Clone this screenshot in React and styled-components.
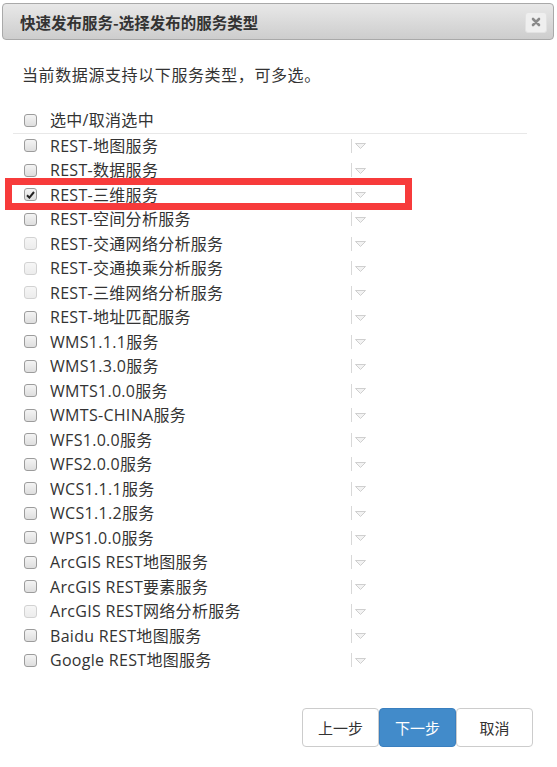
import React from "react";
import styled, { createGlobalStyle, css } from "styled-components";

const GlobalStyle = createGlobalStyle`
  html, body {
    margin: 0;
    padding: 0;
    background: #fff;
  }
  body {
    font-family: "Open Sans", "Noto Sans CJK SC", sans-serif;
    color: #333;
  }
`;

const services = [
  { label: "REST-地图服务" },
  { label: "REST-数据服务" },
  { label: "REST-三维服务", checked: true, highlight: true },
  { label: "REST-空间分析服务" },
  { label: "REST-交通网络分析服务", disabled: true },
  { label: "REST-交通换乘分析服务", disabled: true },
  { label: "REST-三维网络分析服务", disabled: true },
  { label: "REST-地址匹配服务" },
  { label: "WMS1.1.1服务" },
  { label: "WMS1.3.0服务" },
  { label: "WMTS1.0.0服务" },
  { label: "WMTS-CHINA服务" },
  { label: "WFS1.0.0服务" },
  { label: "WFS2.0.0服务" },
  { label: "WCS1.1.1服务" },
  { label: "WCS1.1.2服务" },
  { label: "WPS1.0.0服务" },
  { label: "ArcGIS REST地图服务" },
  { label: "ArcGIS REST要素服务" },
  { label: "ArcGIS REST网络分析服务", disabled: true },
  { label: "Baidu REST地图服务" },
  { label: "Google REST地图服务" },
];

const Dialog = styled.div`
  width: 557px;
  height: 767px;
  box-sizing: border-box;
  padding: 3px 3px 0 2px;
`;

const TitleBar = styled.div`
  height: 37px;
  box-sizing: border-box;
  border: 1px solid #a9a9a9;
  border-radius: 4px;
  background: linear-gradient(#e8e8e8, #cdcdcd);
  display: flex;
  align-items: center;
  justify-content: space-between;
  padding: 0 6px 0 17px;
`;

const Title = styled.span`
  font-family: "Noto Sans CJK SC", sans-serif;
  font-size: 15.5px;
  font-weight: bold;
  color: #333;
`;

const CloseButton = styled.span`
  width: 22px;
  height: 21px;
  margin-top: 1px;
  border-radius: 3px;
  background: #efefef;
  border: 1px solid #e2e2e2;
  box-sizing: border-box;
  display: flex;
  align-items: center;
  justify-content: center;
`;

const Intro = styled.p`
  margin: 23px 0 0 20px;
  font-size: 16px;
  letter-spacing: 0.6px;
  line-height: 24px;
`;

const List = styled.div`
  margin: 21px 0 0 11px;
  width: 514px;
`;

const Row = styled.div`
  height: 24.5px;
  display: flex;
  align-items: center;
  padding-left: 11px;
  font-size: 16px;
  position: relative;

  ${(p) =>
    p.$header &&
    css`
      border-bottom: 1px solid #e8e8e8;
    `}

  ${(p) =>
    p.$highlight &&
    css`
      &::after {
        content: "";
        position: absolute;
        left: -8px;
        top: -5px;
        width: 407px;
        height: 32px;
        box-sizing: border-box;
        border: 7px solid #f73b3b;
        pointer-events: none;
      }
    `}
`;

const Box = styled.span`
  width: 13px;
  height: 13px;
  box-sizing: border-box;
  border-radius: 3px;
  border: 1px solid ${(p) => (p.$disabled ? "#d2d2d2" : "#9c9c9c")};
  background: ${(p) =>
    p.$disabled
      ? "linear-gradient(#f6f6f6, #ececec)"
      : "linear-gradient(#f4f4f4, #dedede)"};
  display: flex;
  align-items: center;
  justify-content: center;
  flex-shrink: 0;
`;

const Label = styled.span`
  width: 301px;
  margin-left: 13px;
  line-height: 24px;
  letter-spacing: 0.3px;
  white-space: nowrap;
`;

const Divider = styled.span`
  width: 1px;
  height: 14px;
  background: #d8d8d8;
`;

const Caret = styled.svg`
  margin-left: 3px;
  margin-top: 1px;
`;

const Footer = styled.div`
  display: flex;
  justify-content: flex-end;
  padding-right: 21px;
  margin-top: 35px;
`;

const Button = styled.button`
  width: 77px;
  height: 39px;
  box-sizing: border-box;
  border-radius: 4px;
  border: 1px solid ${(p) => (p.$primary ? "#3a7fbf" : "#ccc")};
  background: ${(p) => (p.$primary ? "#428bca" : "#fff")};
  color: ${(p) => (p.$primary ? "#fff" : "#333")};
  font-family: "Noto Sans CJK SC", sans-serif;
  font-size: 15px;
  padding: 0;
`;

const Checkbox = ({ checked, disabled }) => (
  <Box $disabled={disabled}>
    {checked && (
      <svg width="9" height="8" viewBox="0 0 9 8">
        <path d="M1 4.2 L3.4 6.6 L8 1" fill="none" stroke="#222" strokeWidth="2" />
      </svg>
    )}
  </Box>
);

const Select = () => (
  <>
    <Divider />
    <Caret width="11" height="6" viewBox="0 0 11 6">
      <polygon points="0.5,0.5 10.5,0.5 5.5,5.5" fill="#f3f3f3" stroke="#cfcfcf" />
    </Caret>
  </>
);

export default function App() {
  return (
    <Dialog>
      <GlobalStyle />
      <TitleBar>
        <Title>快速发布服务-选择发布的服务类型</Title>
        <CloseButton>
          <svg width="10" height="10" viewBox="0 0 10 10">
            <path d="M2 2 L8 8 M8 2 L2 8" stroke="#8a8a8a" strokeWidth="2.6" strokeLinecap="round" />
          </svg>
        </CloseButton>
      </TitleBar>
      <Intro>当前数据源支持以下服务类型，可多选。</Intro>
      <List>
        <Row $header>
          <Checkbox />
          <Label>选中/取消选中</Label>
        </Row>
        {services.map((s) => (
          <Row key={s.label} $highlight={s.highlight}>
            <Checkbox checked={s.checked} disabled={s.disabled} />
            <Label>{s.label}</Label>
            <Select />
          </Row>
        ))}
      </List>
      <Footer>
        <Button>上一步</Button>
        <Button $primary>下一步</Button>
        <Button>取消</Button>
      </Footer>
    </Dialog>
  );
}
